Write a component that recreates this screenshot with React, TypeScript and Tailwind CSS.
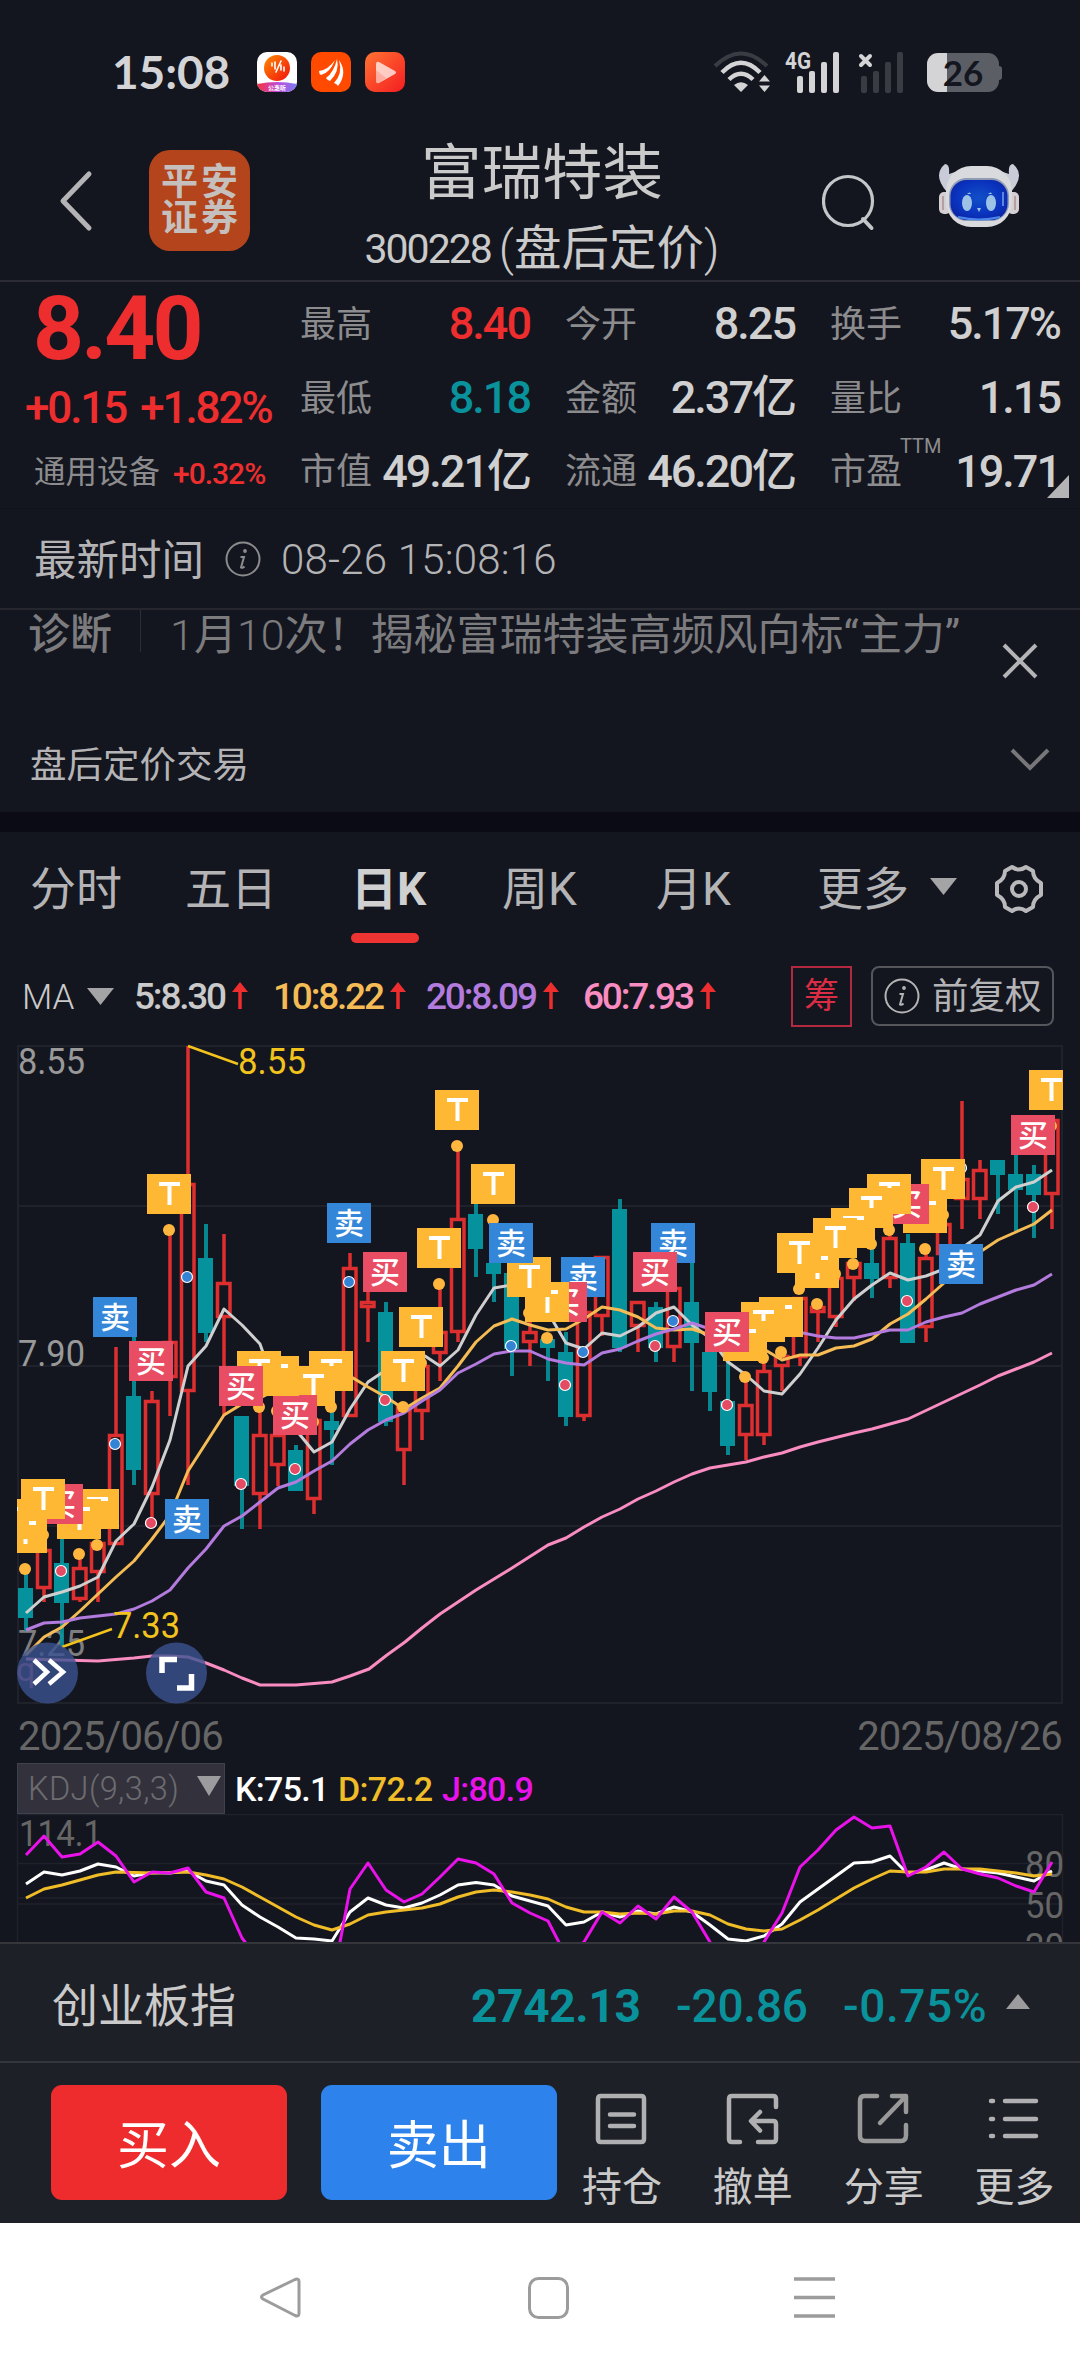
import React from "react";
import clsx from "clsx";

// [type, high, body top, body bottom, low]
type Candle = ["r" | "g", number, number, number, number];

const candles: Candle[] = [
  ["g", 1569, 1588, 1618, 1631], ["r", 1545, 1549, 1589, 1602], ["g", 1538, 1563, 1603, 1647],
  ["r", 1556, 1567, 1600, 1602], ["r", 1542, 1542, 1573, 1602], ["r", 1347, 1434, 1545, 1545],
  ["g", 1334, 1396, 1470, 1485], ["r", 1391, 1400, 1495, 1518], ["r", 1230, 1341, 1378, 1416],
  ["r", 1046, 1183, 1392, 1485], ["g", 1224, 1258, 1333, 1342], ["r", 1234, 1282, 1318, 1416],
  ["g", 1416, 1416, 1486, 1529], ["r", 1408, 1434, 1495, 1529], ["r", 1410, 1434, 1466, 1486],
  ["g", 1445, 1450, 1491, 1491], ["r", 1419, 1419, 1500, 1514], ["g", 1408, 1421, 1430, 1465],
  ["r", 1253, 1267, 1417, 1417], ["r", 1290, 1301, 1308, 1342], ["g", 1302, 1312, 1422, 1426],
  ["r", 1405, 1405, 1451, 1485], ["r", 1364, 1365, 1412, 1440], ["r", 1284, 1331, 1354, 1381],
  ["r", 1146, 1218, 1333, 1342], ["g", 1204, 1214, 1249, 1277], ["g", 1223, 1263, 1274, 1302],
  ["g", 1273, 1273, 1349, 1376], ["r", 1322, 1331, 1343, 1366], ["g", 1339, 1339, 1348, 1381],
  ["g", 1332, 1352, 1417, 1426], ["r", 1311, 1311, 1417, 1421], ["r", 1256, 1256, 1317, 1336],
  ["g", 1199, 1209, 1348, 1352], ["r", 1301, 1301, 1327, 1352], ["g", 1302, 1307, 1348, 1362],
  ["r", 1280, 1287, 1348, 1362], ["g", 1262, 1302, 1343, 1391], ["g", 1352, 1352, 1392, 1411],
  ["g", 1360, 1401, 1446, 1455], ["r", 1380, 1404, 1436, 1460], ["r", 1363, 1370, 1436, 1445],
  ["r", 1355, 1355, 1367, 1391], ["r", 1297, 1297, 1358, 1366], ["r", 1306, 1306, 1313, 1342],
  ["r", 1277, 1277, 1318, 1327], ["r", 1262, 1262, 1279, 1301], ["g", 1247, 1263, 1279, 1298],
  ["r", 1234, 1237, 1279, 1288], ["g", 1234, 1243, 1343, 1343], ["r", 1250, 1257, 1328, 1342],
  ["r", 1223, 1223, 1255, 1255], ["r", 1101, 1178, 1200, 1229], ["r", 1160, 1169, 1200, 1219],
  ["g", 1160, 1160, 1175, 1214], ["g", 1150, 1174, 1190, 1231], ["g", 1165, 1174, 1195, 1238],
  ["r", 1119, 1119, 1195, 1229],
];

const ma5 =
  "26,1613 44,1597 62,1592 80,1586 98,1577 116,1541 134,1524 152,1487 170,1440 188,1366 206,1346 224,1309 242,1325 260,1344 278,1395 296,1430 314,1452 332,1442 350,1409 368,1382 386,1370 404,1362 425,1356 440,1366 458,1350 476,1315 494,1288 512,1285 530,1290 553,1321 566,1343 584,1349 602,1333 620,1336 638,1327 656,1313 674,1307 692,1325 710,1338 728,1362 746,1375 764,1391 782,1394 800,1374 818,1348 836,1320 854,1299 872,1285 890,1273 908,1280 926,1276 944,1269 962,1248 980,1235 998,1201 1016,1187 1034,1182 1052,1170";
const ma10 =
  "26,1655 44,1637 62,1627 80,1611 98,1594 116,1577 134,1561 152,1539 170,1515 188,1471 206,1443 224,1415 242,1404 260,1398 296,1380 332,1370 353,1378 368,1387 386,1397 404,1409 422,1398 440,1388 458,1366 476,1342 494,1326 512,1319 530,1325 548,1330 566,1329 584,1319 602,1307 620,1310 638,1317 656,1328 674,1330 692,1329 710,1335 746,1345 767,1351 782,1360 800,1355 818,1355 836,1348 854,1346 872,1339 890,1324 908,1314 926,1299 944,1283 962,1266 980,1252 998,1240 1016,1232 1034,1224 1052,1210";
const ma20 =
  "26,1630 44,1623 62,1622 80,1618 98,1616 116,1614 134,1609 152,1601 170,1590 188,1568 206,1549 224,1526 242,1516 260,1502 278,1488 296,1482 314,1471 332,1461 350,1444 368,1430 386,1420 404,1413 422,1401 440,1390 458,1373 476,1364 494,1354 512,1351 530,1351 548,1359 566,1363 584,1365 602,1353 620,1349 638,1341 656,1334 674,1329 692,1323 710,1329 746,1330 782,1330 803,1333 818,1336 836,1338 854,1338 872,1334 890,1330 908,1330 926,1322 944,1317 962,1313 980,1304 998,1297 1016,1290 1034,1285 1052,1274";
const ma60 =
  "26,1659 62,1660 98,1661 134,1658 152,1656 170,1656 188,1657 206,1663 224,1670 242,1678 260,1685 296,1685 332,1682 350,1676 369,1669 387,1655 405,1642 422,1628 440,1614 458,1602 476,1590 512,1568 548,1545 566,1538 584,1527 602,1517 620,1509 638,1499 656,1491 674,1482 692,1474 710,1468 746,1462 764,1457 782,1453 800,1447 818,1442 854,1433 872,1429 908,1419 944,1402 980,1385 998,1376 1016,1369 1034,1362 1052,1353";

// [candle index, top, kind]
const markers: [number, number, "T" | "买" | "卖"][] = [
  [57, 1070, "T"], [56, 1115, "买"], [52, 1244, "卖"], [51, 1159, "T"], [50, 1193, "T"],
  [49, 1184, "买"], [48, 1174, "T"], [47, 1188, "T"], [46, 1208, "T"], [45, 1218, "T"],
  [44, 1248, "T"], [43, 1233, "T"], [42, 1297, "T"], [41, 1302, "T"], [40, 1321, "T"],
  [39, 1312, "买"], [36, 1223, "卖"], [35, 1252, "买"], [31, 1257, "卖"], [30, 1282, "买"],
  [29, 1282, "T"], [28, 1257, "T"], [27, 1223, "卖"], [26, 1164, "T"], [24, 1090, "T"],
  [23, 1228, "T"], [22, 1307, "T"], [21, 1351, "T"], [20, 1252, "买"], [18, 1203, "卖"],
  [17, 1351, "T"], [16, 1366, "T"], [15, 1395, "买"], [14, 1356, "T"], [13, 1351, "T"],
  [12, 1366, "买"], [9, 1499, "卖"], [8, 1174, "T"], [7, 1341, "买"], [5, 1297, "卖"],
  [4, 1489, "T"], [3, 1499, "T"], [2, 1484, "买"], [1, 1479, "T"], [0, 1513, "T"],
  [-1, 1499, "T"],
];

const dots: Record<string, [number, number][]> = {
  "#ffb63f": [
    [0, 1569], [1, 1535], [3, 1554], [4, 1545], [8, 1230], [13, 1407], [14, 1411], [16, 1422],
    [17, 1407], [21, 1407], [22, 1363], [23, 1284], [24, 1146], [26, 1220], [28, 1313], [29, 1338],
    [40, 1377], [41, 1358], [42, 1352], [43, 1289], [44, 1304], [45, 1274], [46, 1264], [47, 1244],
    [48, 1230], [50, 1249], [51, 1215], [57, 1126],
  ],
  "#3484d6": [[5, 1444], [9, 1277], [18, 1282], [27, 1346], [31, 1352], [36, 1321], [52, 1168]],
  "#e54b62": [
    [2, 1571], [7, 1523], [12, 1484], [15, 1469], [20, 1400], [30, 1385], [35, 1346], [39, 1405],
    [49, 1301], [56, 1207],
  ],
};

const kLine = [
  1884, 1872, 1875, 1871, 1864, 1867, 1876, 1872.5, 1873, 1871, 1881, 1885, 1905, 1917, 1927, 1938,
  1939, 1941, 1912, 1898, 1905, 1908, 1903, 1895, 1885, 1882.5, 1885, 1896, 1901, 1906, 1925, 1922,
  1912, 1917, 1911, 1914, 1907, 1912, 1925, 1939, 1941, 1936, 1924, 1902, 1889, 1876, 1863, 1862,
  1856, 1874, 1870, 1863, 1869, 1871, 1873, 1877, 1881, 1871,
];
const dLine = [
  1898, 1889, 1885, 1880, 1875, 1872, 1872.5, 1873, 1872.5, 1872, 1875, 1879, 1887, 1897, 1907, 1917,
  1925, 1930, 1924, 1915, 1912, 1910, 1908, 1904, 1897, 1892, 1890, 1892, 1895, 1899, 1907, 1912,
  1912, 1914, 1913, 1914, 1911, 1911, 1915, 1924, 1929, 1931, 1929, 1920, 1910, 1899, 1888, 1879,
  1871, 1872, 1872, 1869, 1869, 1869, 1871, 1873, 1876, 1874,
];
const jLine = [
  1855, 1836, 1857, 1854, 1842, 1856, 1882, 1872, 1873, 1868, 1892, 1898, 1938, 1962, 1985, 1985,
  1985, 1985, 1889, 1863, 1890, 1902, 1894, 1877, 1859, 1863, 1874, 1903, 1913, 1921, 1956, 1942,
  1912, 1923, 1906, 1919, 1897, 1912, 1942, 1970, 1970, 1942, 1913, 1867, 1850, 1830, 1817, 1828,
  1826, 1876, 1867, 1852, 1869, 1874, 1878, 1886, 1892, 1862,
];

const cx = (i: number) => 26 + i * 18;
const toPoints = (ys: number[]) => ys.map((y, i) => `${cx(i)},${y}`).join(" ");

const InfoIcon = ({ className }: { className?: string }) => (
  <svg viewBox="0 0 36 36" className={clsx("h-9 w-9 shrink-0", className)} fill="none">
    <circle cx="18" cy="18" r="16.5" stroke="currentColor" strokeWidth="2" />
    <circle cx="20" cy="10" r="1.9" fill="currentColor" />
    <path d="M15.5 16h3.5l-3 10.5q1.5 1 3.5-1" stroke="currentColor" strokeWidth="2" />
  </svg>
);

const StatusBar = () => (
  <div className="flex h-[130px] pl-[112px] pr-[81px] pt-[50px]">
    <div className="flex h-11 w-[145px] items-center font-['Lato','Roboto',sans-serif] text-[46px] leading-none font-bold tracking-[-0.100px] text-[#d4d4d6]">
      15:08
    </div>
    <div className="flex h-11 items-center gap-[14px]">
      <svg viewBox="0 0 40 40" className="size-10">
        <defs>
          <clipPath id="app"><rect width="40" height="40" rx="10" /></clipPath>
          <linearGradient id="sun" x1="0" y1="0" x2="1" y2="1">
            <stop offset="0" stopColor="#ff8a00" />
            <stop offset="1" stopColor="#f01010" />
          </linearGradient>
          <linearGradient id="band">
            <stop offset="0" stopColor="#f8303a" />
            <stop offset=".5" stopColor="#c04ad8" />
            <stop offset="1" stopColor="#7a7cf4" />
          </linearGradient>
        </defs>
        <g clipPath="url(#app)">
          <rect width="40" height="40" fill="#fff" />
          <circle cx="20" cy="16" r="13" fill="url(#sun)" />
          <path d="M15 11v3M18 10v7M24 9l-5 11M24 13v5M27 15v4" stroke="#fff" strokeWidth="1.6" strokeLinecap="round" />
          <path d="M0 32q20-4 40 0v8H0z" fill="url(#band)" />
          <text x="20" y="38" fontSize="6" fontWeight="700" fill="#fff" textAnchor="middle">公惠听</text>
        </g>
      </svg>
      <svg viewBox="0 0 40 40" className="size-10">
        <rect width="40" height="40" rx="10" fill="#ff4a00" />
        <g fill="#fff">
          <path d="M8 19q9-1 16-11-5 13-14 15-2-1-2-4z" />
          <path d="M15 26q8-6 11-19 3 12-7 22-3-1-4-3z" />
          <path d="M28 8q9 13-1 26-1-2-4-3 9-9 5-23z" />
        </g>
      </svg>
      <svg viewBox="0 0 40 40" className="size-10">
        <defs>
          <linearGradient id="play" x1="0" y1="0" x2="1" y2="1">
            <stop offset="0" stopColor="#ff7433" />
            <stop offset="1" stopColor="#f41c20" />
          </linearGradient>
        </defs>
        <rect width="40" height="40" rx="10" fill="url(#play)" />
        <path d="M14 10l16 9q2 1.500 0 3l-16 9q-3 1-3-2V12q0-3 3-2z" fill="#fff" opacity=".72" />
        <path d="M11 18l10 8-7 5q-3 1-3-2z" fill="#ff6a50" opacity=".3" />
      </svg>
    </div>
    <div className="ml-auto flex h-11 items-center text-[#d4d4d6]">
      <svg viewBox="0 0 58 44" className="h-11 w-[58px]" fill="none">
        <path d="M2 16Q28-9 54 16" stroke="#3a3c44" strokeWidth="4" />
        <path d="M9 22.500Q28 3 47 22.500" stroke="currentColor" strokeWidth="4.500" />
        <path d="M16 29.500Q28 18 40 29.500" stroke="currentColor" strokeWidth="4.500" />
        <path d="M28 42l-7-7q7-5.500 14 0z" fill="currentColor" />
        <path d="M46 31.500l5.500-6.500 5.500 6.500zM46 35.500l5.500 6.500 5.500-6.500z" fill="currentColor" />
      </svg>
      <svg viewBox="0 0 56 44" className="ml-[14px] h-11 w-14" fill="currentColor">
        <text x="0" y="18.500" fontSize="24" fontWeight="700" textLength="26" lengthAdjust="spacingAndGlyphs">4G</text>
        <rect x="12" y="26" width="6" height="17" rx="2" />
        <rect x="24" y="21" width="6" height="22" rx="2" />
        <rect x="36" y="12" width="6" height="31" rx="2" />
        <rect x="48" y="2" width="6" height="41" rx="2" />
      </svg>
      <svg viewBox="0 0 48 44" className="ml-[16px] h-11 w-12">
        <path d="M4 6l9 9M13 6l-9 9" stroke="currentColor" strokeWidth="4" strokeLinecap="round" />
        <g fill="#3a3c44">
          <rect x="4" y="26" width="6" height="17" rx="2" />
          <rect x="16" y="21" width="6" height="22" rx="2" />
          <rect x="28" y="12" width="6" height="31" rx="2" />
          <rect x="40" y="2" width="6" height="41" rx="2" />
        </g>
      </svg>
      <div className="relative ml-[22px] flex h-[39px] w-[72px] items-center justify-center rounded-[11px] bg-gradient-to-r from-[#d4d4d6] from-28% to-[#5c5e66] to-28% font-['Lato',sans-serif] text-[35px] leading-[39px] font-bold text-[#14161f]">
        26
        <span className="absolute top-[13px] -right-[3px] h-[14px] w-[3px] rounded-r bg-[#5c5e66]" />
      </div>
    </div>
  </div>
);

const RobotIcon = () => (
  <svg viewBox="0 0 82 66" className="h-[66px] w-[82px]">
    <defs>
      <radialGradient id="face" cx=".5" cy=".45" r=".7">
        <stop offset="0" stopColor="#1250c8" />
        <stop offset=".6" stopColor="#0a32bd" />
        <stop offset="1" stopColor="#0b1e96" />
      </radialGradient>
    </defs>
    <path d="M7 1q5 0 4 10l12-4-14 22Q-6 12 7 1zM75 1q-5 0-4 10l-12-4 14 22Q88 12 75 1z" fill="#c9ccd8" />
    <rect x="1" y="29" width="12" height="22" rx="5" fill="#d3cfd2" />
    <rect x="69" y="29" width="12" height="22" rx="5" fill="#d3cfd2" />
    <path d="M5 33v14M77 33v14" stroke="#b08f90" strokeWidth="1.500" />
    <rect x="8" y="3" width="66" height="61" rx="25" fill="#d9dadd" />
    <rect x="11" y="15" width="60" height="43" rx="18" fill="#8f9ab4" />
    <rect x="12.500" y="17" width="57" height="40" rx="16" fill="url(#face)" />
    <path d="M20 54q21 5 42 0" stroke="#4b86ea" strokeWidth="2" fill="none" />
    <ellipse cx="29" cy="40" rx="5" ry="8" fill="#9cc3e6" />
    <ellipse cx="53" cy="40" rx="5" ry="8" fill="#9cc3e6" />
    <path d="M29 31q3-3 4 0M50 31q3-3 4 0M39 45h4l-2 4z" fill="#9cc3e6" />
    <path d="M65 29v14" stroke="#5d83e0" strokeWidth="2" />
  </svg>
);

const Header = () => (
  <div className="flex h-[152px] border-b-2 border-[#2a2b34] pl-[59px]">
    <svg viewBox="0 0 34 62" className="mt-[40px] h-[62px] w-[34px]" fill="none">
      <path d="M30 4L4 31l26 27" stroke="#b4b4b6" strokeWidth="5" strokeLinecap="round" strokeLinejoin="round" />
    </svg>
    <div className="mt-5 ml-14 flex h-[101px] w-[101px] flex-col items-center justify-center rounded-[21px] bg-[#b3441b] pl-[3px] text-[37px] leading-[36px] font-bold tracking-[3px] text-[#c5bfbd]">
      <span>平安</span>
      <span>证券</span>
    </div>
    <div className="ml-[92px] flex w-[400px] flex-col items-center text-[#cacaca]">
      <h1 className="mt-[14px] text-[60.500px] leading-[60px]">富瑞特装</h1>
      <div className="mt-[22px] flex items-center text-[47.500px] leading-[46px] whitespace-nowrap">
        <span className="mr-2 text-[41px] tracking-[-2px]">300228</span>
        <span className="font-light">(</span>
        <span>盘后定价</span>
        <span className="font-light">)</span>
      </div>
    </div>
    <svg viewBox="0 0 54 58" className="mt-[44px] ml-[80px] h-[58px] w-[54px]" fill="none" stroke="#c4c6ca">
      <circle cx="26" cy="27" r="24.500" strokeWidth="3.200" />
      <path d="M41 45l8.500 9" strokeWidth="4" strokeLinecap="round" />
    </svg>
    <div className="mt-[33px] ml-[62px]">
      <RobotIcon />
    </div>
  </div>
);

const stats = [
  [
    { label: "最高", value: "8.40", color: "text-[#ee2e2e]" },
    { label: "今开", value: "8.25" },
    { label: "换手", value: "5.17%" },
  ],
  [
    { label: "最低", value: "8.18", color: "text-[#09929b]" },
    { label: "金额", value: "2.37亿" },
    { label: "量比", value: "1.15" },
  ],
  [
    { label: "市值", value: "49.21亿" },
    { label: "流通", value: "46.20亿" },
    { label: "市盈", value: "19.71", sup: "TTM" },
  ],
];

const Quote = () => (
  <div className="relative flex h-[226px]">
    <div className="flex w-[300px] flex-col text-[#ee2e2e]">
      <div className="mt-[3px] ml-[33px] text-[89px] leading-[87px] font-bold tracking-[-2.800px]">8.40</div>
      <div className="mt-[13px] ml-[25px] flex h-[46px] items-center gap-[14px] text-[44px] font-medium tracking-[-2.100px]">
        <span>+0.15</span>
        <span>+1.82%</span>
      </div>
      <div className="mt-[24px] ml-[34px] flex h-9 items-center">
        <span className="w-[139px] text-[31.500px] text-[#8c8c8e]">通用设备</span>
        <span className="text-[30px] font-medium tracking-[-1px]">+0.32%</span>
      </div>
    </div>
    <div className="flex flex-col pt-[5px]">
      {stats.map((row, i) => (
        <div key={i} className="flex h-[74.500px] items-center gap-[35px]">
          {row.map((s) => (
            <div key={s.label} className="relative flex w-[230px] items-center justify-between leading-none whitespace-nowrap">
              <span className="pt-[2px] text-[36px] text-[#8c8c8e]">{s.label}</span>
              {"sup" in s && <span className="absolute -top-[13px] left-[70px] text-[20px] text-[#8c8c8e]">{s.sup}</span>}
              <span className={clsx("text-[45px] font-medium tracking-[-2px]", s.color ?? "text-[#d0d0d0]")}>{s.value}</span>
            </div>
          ))}
        </div>
      ))}
    </div>
    <svg viewBox="0 0 22 23" className="absolute top-[193px] left-[1047px] h-[23px] w-[22px]">
      <path d="M22 0v23H0z" fill="#b4b4b6" />
    </svg>
  </div>
);

const Notices = () => (
  <>
    <div className="flex h-[102px] items-center border-t border-b-2 border-t-[#101119] border-b-[#25262e] pt-[3px] pl-[34px] text-[#b4b4b6]">
      <span className="pt-[2px] text-[42.500px] leading-none">最新时间</span>
      <InfoIcon className="mb-[3px] ml-[21px] text-[#8c8c8e]" />
      <span className="ml-[20px] text-[42px] leading-none font-light tracking-[0.200px]">08-26 15:08:16</span>
    </div>
    <div className="flex h-[202px] text-[#7c7c7f]">
      <div className="w-[974px]">
        <div className="flex h-[50px] items-center pl-[28px]">
          <span className="text-[42px] leading-none font-medium">诊断</span>
          <span className="ml-[28px] h-[42px] w-px self-start bg-[#2c2d36]" />
          <span className="ml-[29px] text-[43px] leading-none whitespace-nowrap">
            <span className="font-light">1</span>月<span className="font-light">10</span>次！揭秘富瑞特装高频风向标“主力”
          </span>
        </div>
        <div className="mt-[84px] pl-[30px] text-[36.500px] leading-[44px] text-[#b4b4b6]">盘后定价交易</div>
      </div>
      <div className="flex flex-1 flex-col">
        <svg viewBox="0 0 36 38" className="mt-[32px] ml-[28px] h-[38px] w-9" stroke="#b4b4b6" strokeWidth="4">
          <path d="M2 3l32 32M34 3L2 35" />
        </svg>
        <svg viewBox="0 0 40 24" className="mt-[68px] ml-[36px] h-6 w-10" fill="none" stroke="#77777a" strokeWidth="4">
          <path d="M2 2l18 18L38 2" />
        </svg>
      </div>
    </div>
    <div className="h-5 bg-[#0b0b15]" />
  </>
);

const Down = ({ className }: { className?: string }) => (
  <svg viewBox="0 0 27 17" className={clsx("h-[17px] w-[27px] shrink-0", className)}>
    <path d="M0 0h27L13.500 17z" fill="#a4a4a6" />
  </svg>
);

const Tabs = () => (
  <div className="flex h-[114px] items-start pt-[32px] pl-[30px] text-[46px] leading-[50px] whitespace-nowrap text-[#b4b4b6]">
    <span className="w-[155px]">分时</span>
    <span className="w-[166px]">五日</span>
    <div className="w-[151px] font-bold text-[#d0d0d0]">
      <div>日K</div>
      <div className="mt-[19px] h-[10px] w-[68px] rounded-full bg-[#ee3433]" />
    </div>
    <span className="w-[154px]">周K</span>
    <span className="w-[161px]">月K</span>
    <span className="w-[113px]">更多</span>
    <Down className="mt-[14px]" />
    <svg viewBox="0 0 50 50" className="ml-[37px] size-[50px]" fill="none" stroke="#b9b9bb" strokeWidth="4" strokeLinejoin="round">
      <path d="M18 3q7 5 14 0l7 4q0 8 8 12v12q-8 4-8 12l-7 4q-7-5-14 0l-7-4q0-8-8-12V19q8-4 8-12z" />
      <circle cx="25" cy="25" r="7" />
    </svg>
  </div>
);

const UpArrow = () => (
  <svg viewBox="0 0 16 28" className="ml-[7px] h-[28px] w-4">
    <path d="M8 0l8 10H0z" fill="#ee2e2e" />
    <path d="M8 6v21" stroke="#ee2e2e" strokeWidth="3.500" />
  </svg>
);

const mas = [
  { text: "5:8.30", color: "text-[#cacaca]", width: "w-[139px]" },
  { text: "10:8.22", color: "text-[#f5bc55]", width: "w-[153px]" },
  { text: "20:8.09", color: "text-[#b27bdd]", width: "w-[157px]" },
  { text: "60:7.93", color: "text-[#f98cc0]", width: "w-[208px]" },
];

const MaRow = () => (
  <div className="flex h-[84px] items-center pt-[16px] pl-[22px] leading-none">
    <span className="w-[65px] pt-[3px] text-[35px] font-light text-[#cacaca]">MA</span>
    <Down className="mr-[20px]" />
    {mas.map((m) => (
      <div key={m.text} className={clsx("flex items-center text-[37px] font-medium tracking-[-2.200px]", m.color, m.width)}>
        {m.text}
        <UpArrow />
      </div>
    ))}
    <div className="flex h-[61px] w-[61px] shrink-0 items-center justify-center border-2 border-[#b42840] text-[35px] text-[#dc2c44]">
      筹
    </div>
    <div className="ml-[19px] flex h-[60px] w-[183px] shrink-0 items-center rounded-lg border-2 border-[#55565c] pl-[11px] text-[36.500px] whitespace-nowrap text-[#b4b4b6]">
      <InfoIcon className="mr-[12px]" />
      <span className="pt-[3px]">前复权</span>
    </div>
  </div>
);

const markerFill = { T: "#ffb833", 买: "#e84d63", 卖: "#3486d8" };

const KChart = () => (
  <svg viewBox="0 1030 1080 677" className="h-[677px] w-[1080px]" fill="none">
    <defs>
      <clipPath id="plot"><rect x="17" y="1040" width="1046" height="665" /></clipPath>
    </defs>
    <g stroke="#1f212b" strokeWidth="2">
      <rect x="18" y="1046" width="1044" height="657" />
      <path d="M18 1206h1044M18 1366h1044M18 1526h1044" />
    </g>
    <g fontSize="37" fill="#999">
      <text x="18" y="1074" textLength="67" lengthAdjust="spacingAndGlyphs">8.55</text>
      <text x="18" y="1366" textLength="67" lengthAdjust="spacingAndGlyphs">7.90</text>
      <text x="18" y="1656" textLength="67" lengthAdjust="spacingAndGlyphs" opacity=".8">7.25</text>
    </g>
    <g clipPath="url(#plot)">
      {candles.map(([type, high, top, bottom, low], i) => {
        const x = cx(i);
        return type === "g" ? (
          <g key={i} fill="#05929c">
            <rect x={x - 2} y={high} width="4" height={low - high} opacity=".9" />
            <rect x={x - 8} y={top} width="15" height={bottom - top} />
          </g>
        ) : (
          <g key={i} stroke="#dd2f2f" strokeWidth="3.500">
            <path d={`M${x} ${high}V${top + 2}M${x} ${bottom - 2}V${low}`} />
            <rect x={x - 6.5} y={top + 1.5} width="12.5" height={bottom - top - 3} />
          </g>
        );
      })}
      <g strokeWidth="3" strokeLinejoin="round">
        <polyline points={ma60} stroke="#f98cc0" />
        <polyline points={ma5} stroke="#cfcfcf" />
        <polyline points={ma10} stroke="#f5bc55" />
        <polyline points={ma20} stroke="#b27bdd" />
      </g>
      {Object.entries(dots).map(([color, list]) =>
        list.map(([i, y]) => (
          <circle
            key={i}
            cx={cx(i) - 1}
            cy={y}
            r={color === "#ffb63f" ? 6 : 5.5}
            fill={color}
            stroke={color === "#ffb63f" ? "none" : "#fff"}
            strokeWidth="1.200"
          />
        )),
      )}
      <g fontSize="30" fontWeight="500" textAnchor="middle">
        {markers.map(([i, y, kind]) => (
          <g key={i}>
            <rect x={cx(i) - 23} y={y} width="44" height="40" fill={markerFill[kind]} />
            {kind === "T" ? (
              <path d={`M${cx(i) - 11} ${y + 10}h21M${cx(i) - 0.5} ${y + 10}v21`} stroke="#fff" strokeWidth="4" />
            ) : (
              <text x={cx(i) - 1} y={y + 31} fill="#fff">{kind}</text>
            )}
          </g>
        ))}
      </g>
    </g>
    <g fontSize="37" fill="#f2c21d">
      <path d="M188 1046l50 18M62 1647l50-18" stroke="#f2c21d" strokeWidth="2.500" />
      <text x="238" y="1074" textLength="68" lengthAdjust="spacingAndGlyphs">8.55</text>
      <text x="113" y="1638" textLength="67" lengthAdjust="spacingAndGlyphs">7.33</text>
    </g>
    <text x="16" y="1681" fontSize="34" fill="#a8486f">q</text>
    <circle cx="47.500" cy="1673" r="30.500" fill="#3b5290" opacity=".8" />
    <circle cx="176.500" cy="1673" r="30.500" fill="#3b5290" opacity=".8" />
    <path d="M34 1660l13 12-13 12M49 1660l14 12-14 12" stroke="#fff" strokeWidth="4.500" />
    <path d="M162 1673v-13.500h15M191.500 1674v14H177" stroke="#fff" strokeWidth="5.500" />
  </svg>
);

const KdjChart = () => (
  <svg viewBox="0 1814 1080 128" className="h-[128px] w-[1080px]" fill="none">
    <g stroke="#1f212b" strokeWidth="1.500">
      <rect x="17.500" y="1814.500" width="1045" height="200" />
      <path d="M18 1863.500h1044M18 1898h1044M18 1904h1044" />
    </g>
    <g fontSize="37" fill="#666">
      <text x="19" y="1846" textLength="83" lengthAdjust="spacingAndGlyphs">114.1</text>
      <text x="1025" y="1877" textLength="39" lengthAdjust="spacingAndGlyphs">80</text>
      <text x="1025" y="1918" textLength="39" lengthAdjust="spacingAndGlyphs">50</text>
      <text x="1025" y="1959" textLength="39" lengthAdjust="spacingAndGlyphs">20</text>
    </g>
    <g strokeWidth="3" strokeLinejoin="round">
      <polyline points={toPoints(kLine)} stroke="#fff" />
      <polyline points={toPoints(dLine)} stroke="#f0bd28" />
      <polyline points={toPoints(jLine)} stroke="#ea12ea" />
    </g>
  </svg>
);

const KdjHeader = () => (
  <>
    <div className="flex h-[56px] items-center justify-between pt-[4px] pr-[18px] pl-[18px] text-[40px] leading-none tracking-[-0.800px] text-[#666]">
      <span>2025/06/06</span>
      <span>2025/08/26</span>
    </div>
    <div className="flex h-[51px] items-center pl-[17px] text-[34px] leading-none font-medium tracking-[-0.700px] whitespace-nowrap">
      <div className="flex h-[51px] w-[208px] items-center border border-[#3d424e] bg-[#33323c] pl-[10px] font-light tracking-[0.400px] text-[#6c6c70]">
        <span className="w-[169px] pt-[2px] text-[32.500px]">KDJ(9,3,3)</span>
        <svg viewBox="0 0 24 20" className="mb-[5px] h-5 w-6"><path d="M0 0h24L12 20z" fill="#9c9c9e" /></svg>
      </div>
      <span className="ml-[10px] w-[103px] text-white">K:75.1</span>
      <span className="w-[104px] text-[#f0bd28]">D:72.2</span>
      <span className="text-[#ea12ea]">J:80.9</span>
    </div>
  </>
);

const IndexBar = () => (
  <div className="flex h-[119px] items-center border-t-2 border-[#34363c] pt-[6px] pl-[52px] leading-none text-[#09929b]">
    <span className="w-[419px] text-[46px] text-[#cacaca]">创业板指</span>
    <span className="w-[205px] text-[46px] font-bold tracking-[-0.300px]">2742.13</span>
    <span className="w-[167px] text-[46px] font-medium tracking-[-0.200px]">-20.86</span>
    <span className="w-[163px] text-[46px] font-medium tracking-[0.600px]">-0.75%</span>
    <svg viewBox="0 0 24 15" className="mb-[8px] h-[15px] w-6"><path d="M12 0l12 15H0z" fill="#9c9c9e" /></svg>
  </div>
);

const actions = [
  {
    label: "持仓",
    icon: <path d="M6 3h40q3 0 3 3v40q0 3-3 3H6q-3 0-3-3V6q0-3 3-3zM15 21.500h24M15 33h24" />,
  },
  {
    label: "撤单",
    icon: <path d="M50 14V6q0-3-3-3H6Q3 3 3 6v40q0 3 3 3h8M32 49h15q3 0 3-3V31q0-3-3-3H26M34 19l-9 9 9 9.500" />,
  },
  {
    label: "分享",
    icon: <path d="M20 3H7Q3 3 3 8v35q0 5 5 5h36q5 0 5-6V32M35 3h14v16M48 4L23 30" />,
  },
  {
    label: "更多",
    icon: <path d="M3 8h2M17 8h31M3 26h2M17 26h31M3 43h2M17 43h31" />,
  },
];

const ActionBar = () => (
  <div className="flex h-[162px] border-t-2 border-[#34363c] pt-[22px] pl-[51px] text-white">
    <button className="mr-[34px] h-[115px] w-[236px] rounded-[11px] bg-[#ee2c2d] pt-[8px] text-[52px] leading-none">买入</button>
    <button className="h-[115px] w-[236px] rounded-[11px] bg-[#2d82ec] pt-[8px] text-[52px] leading-none">卖出</button>
    {actions.map((a) => (
      <div key={a.label} className="flex w-[131px] flex-col items-center">
        <svg
          viewBox="0 0 53 52"
          className="mt-2 h-[52px] w-[53px]"
          fill="none"
          stroke={a.label === "分享" ? "#999" : "#b0b0b2"}
          strokeWidth="4.500"
          strokeLinecap="round"
          strokeLinejoin="round"
        >
          {a.icon}
        </svg>
        <span className="mt-[22px] text-[40px] leading-[42px] text-[#cacaca]">{a.label}</span>
      </div>
    ))}
  </div>
);

const NavBar = () => (
  <div className="flex h-[150px] items-start bg-white pt-[52px] pl-[258px]">
    <svg viewBox="0 0 44 44" className="size-11" fill="none" stroke="#9c9c9c" strokeWidth="3">
      <path d="M37 4.500L5 20q-3 2 0 4l32 16.500q4 1.500 4-2v-32q0-3.500-4-2z" />
    </svg>
    <svg viewBox="0 0 44 44" className="ml-[224px] size-11" fill="none" stroke="#9c9c9c" strokeWidth="3">
      <rect x="3.500" y="3.500" width="38" height="39" rx="9" />
    </svg>
    <svg viewBox="0 0 44 44" className="ml-[222px] size-11" stroke="#9c9c9c" strokeWidth="3.500">
      <path d="M2 4h41M2 22.500h41M2 41h41" />
    </svg>
  </div>
);

const App = () => {
  return (
    <div className="flex h-[2373px] w-[1080px] flex-col overflow-hidden bg-[#14161f] font-['Roboto','Noto_Sans_CJK_SC',sans-serif]">
      <StatusBar />
      <Header />
      <Quote />
      <Notices />
      <Tabs />
      <MaRow />
      <KChart />
      <KdjHeader />
      <KdjChart />
      <div className="bg-[#1e2027]">
        <IndexBar />
        <ActionBar />
      </div>
      <NavBar />
    </div>
  );
};

export default App;
